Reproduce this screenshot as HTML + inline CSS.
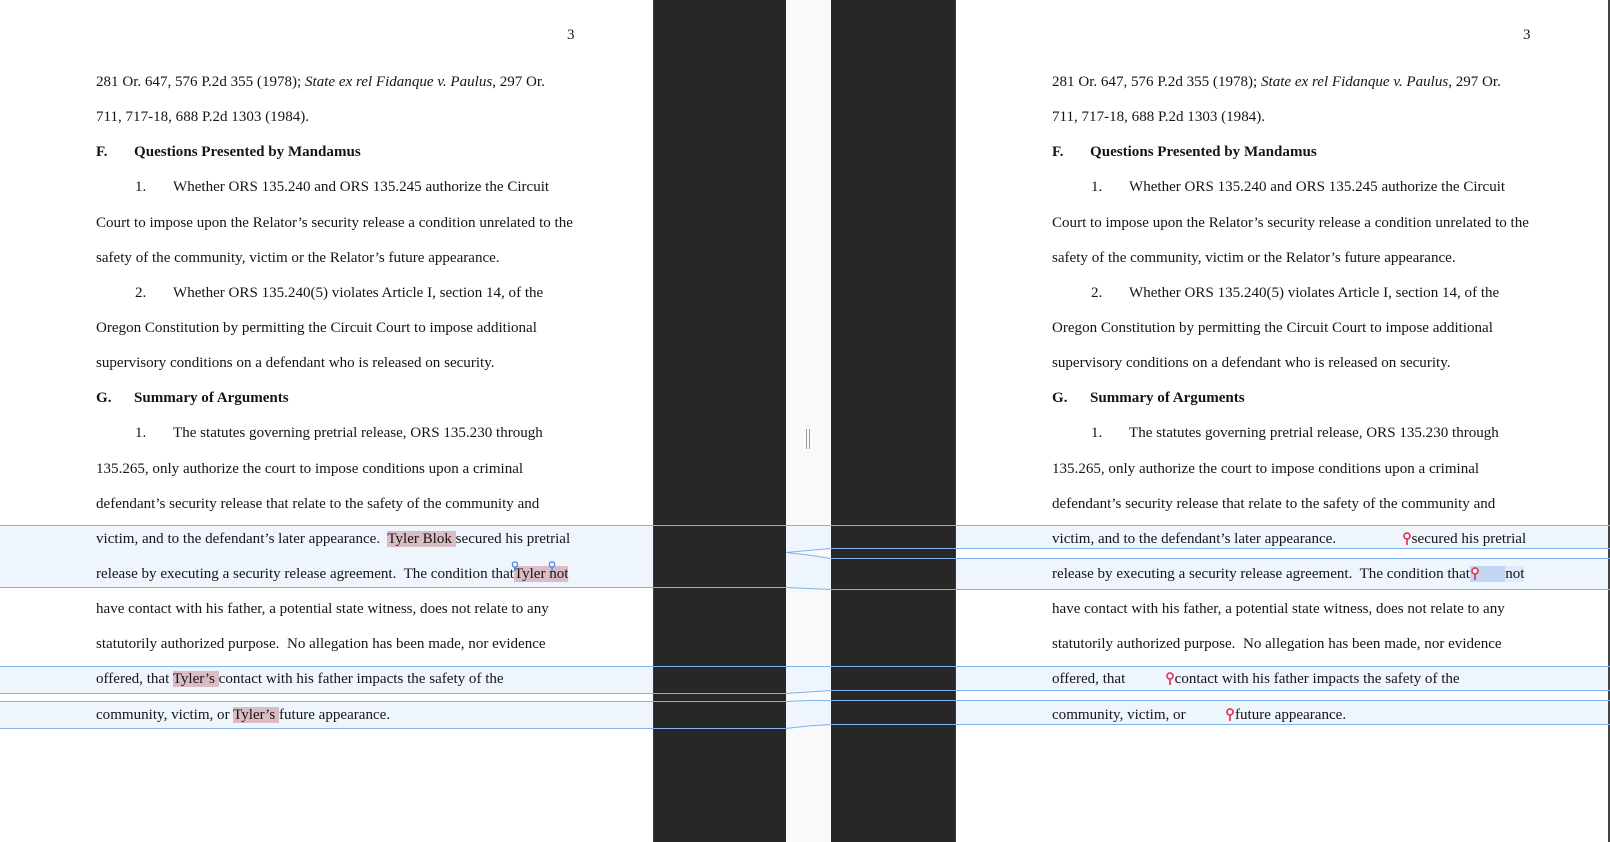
<!DOCTYPE html>
<html><head><meta charset="utf-8"><style>
*{margin:0;padding:0;box-sizing:border-box}
body{width:1610px;height:842px;position:relative;overflow:hidden;background:#fff;font-family:"Liberation Serif",serif;color:#151515}
.page{position:absolute;top:0;height:842px;overflow:hidden}
.lines{position:absolute;top:65px;left:96px;font-size:15.05px;line-height:35.15px;white-space:nowrap}
.lines div{height:35.15px}
.pn{position:absolute;left:567px;top:27px;font-size:15px}
.hl{background:#dcbcc4}
.gone{color:transparent;position:relative}
.b{font-weight:bold}
.num{display:inline-block;width:38px}
.in{padding-left:39px}
.band{position:absolute;background:#eef5fd}
.pinr{position:absolute;top:1px;width:8px;height:13px}
</style></head><body>

<div class="band" style="left:0;top:525px;width:653px;height:62px"></div>
<div class="band" style="left:0;top:666px;width:653px;height:27px"></div>
<div class="band" style="left:0;top:701px;width:653px;height:27px"></div>
<div class="band" style="left:956px;top:525px;width:654px;height:23px"></div>
<div class="band" style="left:956px;top:558px;width:654px;height:31px"></div>
<div class="band" style="left:956px;top:666px;width:654px;height:24px"></div>
<div class="band" style="left:956px;top:700px;width:654px;height:24px"></div>

<div class="page" style="left:0;width:653px">
<div class="pn">3</div>
<div class="lines">
<div>281 Or. 647, 576 P.2d 355 (1978); <i>State ex rel Fidanque v. Paulus</i>, 297 Or.</div>
<div>711, 717-18, 688 P.2d 1303 (1984).</div>
<div class="b"><span class="num">F.</span>Questions Presented by Mandamus</div>
<div class="in"><span class="num">1.</span>Whether ORS 135.240 and ORS 135.245 authorize the Circuit</div>
<div>Court to impose upon the Relator’s security release a condition unrelated to the</div>
<div>safety of the community, victim or the Relator’s future appearance.</div>
<div class="in"><span class="num">2.</span>Whether ORS 135.240(5) violates Article I, section 14, of the</div>
<div>Oregon Constitution by permitting the Circuit Court to impose additional</div>
<div>supervisory conditions on a defendant who is released on security.</div>
<div class="b"><span class="num">G.</span>Summary of Arguments</div>
<div class="in"><span class="num">1.</span>The statutes governing pretrial release, ORS 135.230 through</div>
<div>135.265, only authorize the court to impose conditions upon a criminal</div>
<div>defendant’s security release that relate to the safety of the community and</div>
<div>victim, and to the defendant’s later appearance.&nbsp; <span class="hl">Tyler Blok </span>secured his pretrial</div>
<div>release by executing a security release agreement.&nbsp; The condition that<span class="hl" style="position:relative">Tyler not<svg style="position:absolute;left:-3px;top:-5px" width="8" height="10" viewBox="0 0 8 10"><circle cx="4" cy="3.5" r="2.6" fill="#fff" stroke="#4a86e0" stroke-width="1.4"/><path d="M4 6v4" stroke="#4a86e0" stroke-width="1.2"/></svg><svg style="position:absolute;left:34px;top:-5px" width="8" height="10" viewBox="0 0 8 10"><circle cx="4" cy="3.5" r="2.6" fill="#fff" stroke="#4a86e0" stroke-width="1.4"/><path d="M4 6v4" stroke="#4a86e0" stroke-width="1.2"/></svg></span></div>
<div>have contact with his father, a potential state witness, does not relate to any</div>
<div>statutorily authorized purpose.&nbsp; No allegation has been made, nor evidence</div>
<div>offered, that <span class="hl">Tyler’s </span>contact with his father impacts the safety of the</div>
<div>community, victim, or <span class="hl">Tyler’s </span>future appearance.</div>
</div>
</div>

<div class="page" style="left:956px;width:654px;border-right:2px solid #444">
<div class="pn">3</div>
<div class="lines">
<div>281 Or. 647, 576 P.2d 355 (1978); <i>State ex rel Fidanque v. Paulus</i>, 297 Or.</div>
<div>711, 717-18, 688 P.2d 1303 (1984).</div>
<div class="b"><span class="num">F.</span>Questions Presented by Mandamus</div>
<div class="in"><span class="num">1.</span>Whether ORS 135.240 and ORS 135.245 authorize the Circuit</div>
<div>Court to impose upon the Relator’s security release a condition unrelated to the</div>
<div>safety of the community, victim or the Relator’s future appearance.</div>
<div class="in"><span class="num">2.</span>Whether ORS 135.240(5) violates Article I, section 14, of the</div>
<div>Oregon Constitution by permitting the Circuit Court to impose additional</div>
<div>supervisory conditions on a defendant who is released on security.</div>
<div class="b"><span class="num">G.</span>Summary of Arguments</div>
<div class="in"><span class="num">1.</span>The statutes governing pretrial release, ORS 135.230 through</div>
<div>135.265, only authorize the court to impose conditions upon a criminal</div>
<div>defendant’s security release that relate to the safety of the community and</div>
<div>victim, and to the defendant’s later appearance.&nbsp; <span class="gone">Tyler Blok<svg class="pinr" style="right:-3px" viewBox="0 0 8 13"><circle cx="4" cy="4" r="3" fill="#fff" stroke="#e0405a" stroke-width="1.8"/><path d="M4 7v6" stroke="#e0405a" stroke-width="1.8"/></svg></span> secured his pretrial</div>
<div>release by executing a security release agreement.&nbsp; The condition that<span class="gone" style="background:#c2d6f4">Tyler <svg class="pinr" style="left:1px" viewBox="0 0 8 13"><circle cx="4" cy="4" r="3" fill="#fff" stroke="#e0405a" stroke-width="1.8"/><path d="M4 7v6" stroke="#e0405a" stroke-width="1.8"/></svg></span><span style="background:#dfeafa">not</span></div>
<div>have contact with his father, a potential state witness, does not relate to any</div>
<div>statutorily authorized purpose.&nbsp; No allegation has been made, nor evidence</div>
<div>offered, that <span class="gone">Tyler’s<svg class="pinr" style="right:-3px" viewBox="0 0 8 13"><circle cx="4" cy="4" r="3" fill="#fff" stroke="#e0405a" stroke-width="1.8"/><path d="M4 7v6" stroke="#e0405a" stroke-width="1.8"/></svg></span> contact with his father impacts the safety of the</div>
<div>community, victim, or <span class="gone">Tyler’s<svg class="pinr" style="right:-3px" viewBox="0 0 8 13"><circle cx="4" cy="4" r="3" fill="#fff" stroke="#e0405a" stroke-width="1.8"/><path d="M4 7v6" stroke="#e0405a" stroke-width="1.8"/></svg></span> future appearance.</div>
</div>
</div>

<div style="position:absolute;left:653px;top:0;width:133px;height:842px;background:#272727;border-left:1px solid #3a3a3a"></div>
<div style="position:absolute;left:786px;top:0;width:45px;height:842px;background:#f9f9f9"></div>
<div style="position:absolute;left:831px;top:0;width:125px;height:842px;background:#272727;border-right:1px solid #3a3a3a"></div>

<svg style="position:absolute;left:0;top:0" width="1610" height="842">
<g fill="#eef5fd">
<polygon points="786,525 831,525 831,548 786,552"/>
<polygon points="786,552 831,558 831,589 786,587"/>
<polygon points="786,666 831,666 831,690 786,693"/>
<polygon points="786,701 831,700 831,724 786,728"/>
</g>
<g stroke="#7fb2ee" stroke-width="1" fill="none">
<path d="M0 525.5H1610"/>
<path d="M0 587.5H786L808 588.5L831 589.5H1610"/>
<path d="M786 552.5L808 550.5L831 548.5H1610"/>
<path d="M786 552.5L808 555L831 558.5H1610"/>
<path d="M0 666.5H1610"/>
<path d="M0 693.5H786L808 692L831 690.5H1610"/>
<path d="M0 701.5H786L808 700.5L831 700.5H1610"/>
<path d="M0 728.5H786L808 726L831 724.5H1610"/>
</g>
<path d="M806.5 429V449M809.5 429V449" stroke="#999" stroke-width="1"/>
</svg>
</body></html>
